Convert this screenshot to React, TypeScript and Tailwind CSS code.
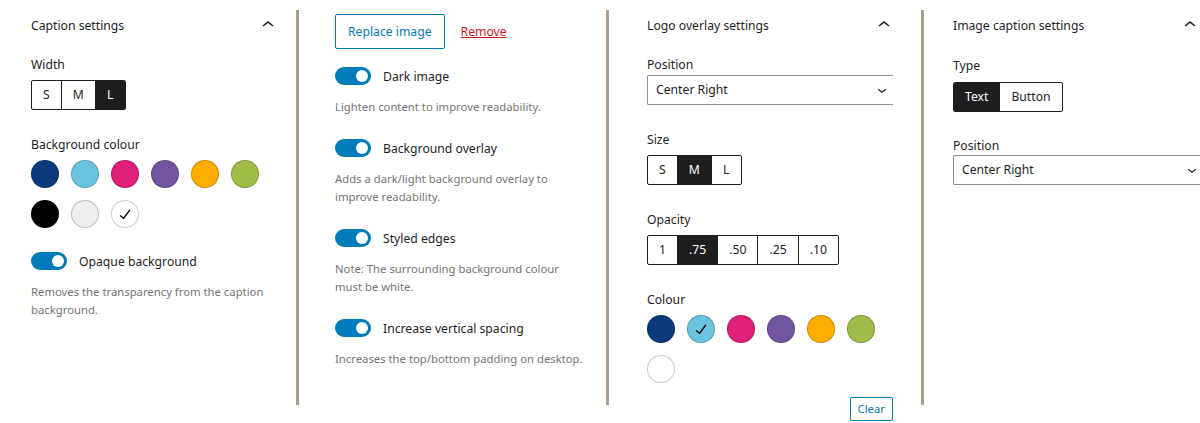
import React from "react";

const palette = ["#0a3a7c", "#6bc4df", "#df1f78", "#72559f", "#ffad00", "#a2bc4a"];

function ChevronUp() {
  return (
    <svg width="24" height="24" viewBox="0 0 24 24" className="shrink-0 fill-[#1e1e1e]">
      <path d="M6.5 12.4L12 8l5.5 4.4-.9 1.2L12 10l-4.5 3.6-1-1.2z" />
    </svg>
  );
}

function ChevronDown() {
  return (
    <svg width="18" height="18" viewBox="0 0 24 24" className="shrink-0 fill-[#1e1e1e]">
      <path d="M17.5 11.6L12 16l-5.5-4.4.9-1.2L12 14l4.6-3.6 1 1.2z" />
    </svg>
  );
}

function Check() {
  return (
    <svg width="22" height="22" viewBox="0 0 24 24" className="fill-black">
      <path d="M16.7 7.1l-6.3 8.5-3.3-2.5-.9 1.2 4.5 3.4L17.9 7.9z" />
    </svg>
  );
}

function PanelHeader({ title }: { title: string }) {
  return (
    <div className="flex h-6 w-[249px] items-center justify-between">
      <span className="pt-[2px] leading-5">{title}</span>
      <ChevronUp />
    </div>
  );
}

function Label({ children, className = "" }: { children: React.ReactNode; className?: string }) {
  return <div className={`h-5 leading-[22px] ${className}`}>{children}</div>;
}

function Segmented({ items, active, className = "" }: { items: string[]; active: number; className?: string }) {
  return (
    <div className={`flex h-[30px] w-fit overflow-hidden rounded-[2px] border border-[#1e1e1e] ${className}`}>
      {items.map((it, i) => (
        <div
          key={it}
          className={`flex min-w-[29px] items-center justify-center px-[11px] ${
            i < items.length - 1 ? "border-r border-[#1e1e1e]" : ""
          } ${i === active ? "bg-[#1e1e1e] text-white" : ""}`}
        >
          {it}
        </div>
      ))}
    </div>
  );
}

function Select({ value, className = "" }: { value: string; className?: string }) {
  return (
    <div
      className={`flex h-[30px] items-center justify-between rounded-l-[2px] border border-r-0 border-[#8c8f94] pl-2 pr-[2px] ${className}`}
    >
      <span>{value}</span>
      <ChevronDown />
    </div>
  );
}

function Swatches({ colors, selected, className = "" }: { colors: string[]; selected: number; className?: string }) {
  return (
    <div className={`flex w-[249px] flex-wrap gap-3 ${className}`}>
      {colors.map((c, i) => (
        <div
          key={c + i}
          className="flex h-7 w-7 items-center justify-center rounded-full border border-black/20"
          style={{ backgroundColor: c }}
        >
          {i === selected && <Check />}
        </div>
      ))}
    </div>
  );
}

function Toggle({ label, help, className = "" }: { label: string; help: React.ReactNode; className?: string }) {
  return (
    <div className={className}>
      <div className="flex h-5 items-center gap-3">
        <div className="flex h-[18px] w-9 items-center justify-end rounded-full bg-[#007cba] pr-[3px]">
          <div className="h-3 w-3 rounded-full bg-white" />
        </div>
        <span className="pt-[2px] leading-5">{label}</span>
      </div>
      <p className="mt-3 text-[11.3px] leading-[18px] text-[#757575]">{help}</p>
    </div>
  );
}

function Separator() {
  return <div className="mt-[10px] h-[395px] w-[3px] shrink-0 bg-[#ad9d8a]" />;
}

export default function App() {
  return (
    <div className="flex h-[423px] w-[1200px] items-start overflow-hidden bg-white font-['Noto_Sans',sans-serif] text-[12.2px] text-[#1e1e1e]">
      {/* Caption settings */}
      <div className="w-[296px] shrink-0 pl-[31px] pt-[13px]">
        <PanelHeader title="Caption settings" />
        <Label className="mt-[17px]">Width</Label>
        <Segmented items={["S", "M", "L"]} active={2} className="mt-1.5" />
        <Label className="mt-6">Background colour</Label>
        <Swatches colors={[...palette, "#000000", "#efefef", "#ffffff"]} selected={8} className="mt-1.5" />
        <Toggle
          className="mt-[23px] w-[240px]"
          label="Opaque background"
          help="Removes the transparency from the caption background."
        />
      </div>
      <Separator />

      {/* Image options */}
      <div className="w-[307px] shrink-0 pl-9 pt-[14px]">
        <div className="flex items-center gap-4">
          <div className="flex h-[35px] items-center rounded-[2px] border border-[#007cba] px-3 pt-px text-[#007cba]">
            Replace image
          </div>
          <span className="pt-px text-[#cc1818] underline">Remove</span>
        </div>
        <Toggle className="mt-[17px]" label="Dark image" help="Lighten content to improve readability." />
        <Toggle
          className="mt-[22px] w-[218px]"
          label="Background overlay"
          help="Adds a dark/light background overlay to improve readability."
        />
        <Toggle
          className="mt-[22px] w-[228px]"
          label="Styled edges"
          help="Note: The surrounding background colour must be white."
        />
        <Toggle
          className="mt-[22px]"
          label="Increase vertical spacing"
          help="Increases the top/bottom padding on desktop."
        />
      </div>
      <Separator />

      {/* Logo overlay settings */}
      <div className="w-[312px] shrink-0 pl-[38px] pt-[13px]">
        <div className="w-[246px]">
          <PanelHeader title="Logo overlay settings" />
          <Label className="mt-[17px]">Position</Label>
          <Select value="Center Right" className="mt-px w-[246px]" />
          <Label className="mt-6">Size</Label>
          <Segmented items={["S", "M", "L"]} active={1} className="mt-1.5" />
          <Label className="mt-6">Opacity</Label>
          <Segmented items={["1", ".75", ".50", ".25", ".10"]} active={1} className="mt-1.5" />
          <Label className="mt-6">Colour</Label>
          <Swatches colors={[...palette, "#ffffff"]} selected={1} className="mt-1.5" />
          <div className="mt-[14px] flex justify-end">
            <div className="flex h-6 items-center rounded-[2px] border border-[#007cba] px-[7px] text-[11.3px] text-[#007cba]">
              Clear
            </div>
          </div>
        </div>
      </div>
      <Separator />

      {/* Image caption settings */}
      <div className="w-[276px] shrink-0 pl-[29px] pt-[13px]">
        <PanelHeader title="Image caption settings" />
        <Label className="mt-[18px]">Type</Label>
        <Segmented items={["Text", "Button"]} active={0} className="mt-[7px]" />
        <Label className="mt-[23px]">Position</Label>
        <Select value="Center Right" className="w-[250px]" />
      </div>
    </div>
  );
}
